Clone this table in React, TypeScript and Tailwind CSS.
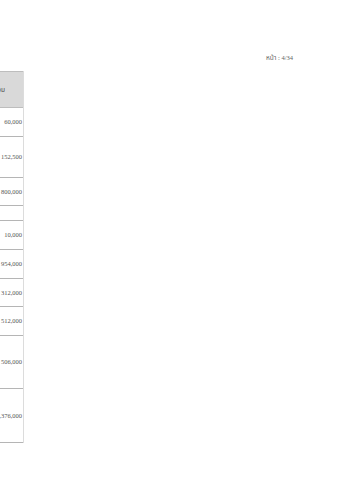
const rows = [
  { amount: '60,000', h: 29 },
  { amount: '152,500', h: 41 },
  { amount: '800,000', h: 28 },
  { amount: '', h: 15 },
  { amount: '10,000', h: 29 },
  { amount: '954,000', h: 29 },
  { amount: '312,000', h: 28 },
  { amount: '512,000', h: 29 },
  { amount: '506,000', h: 53 },
  { amount: '2,376,000', h: 54 },
]

export default function App() {
  return (
    <div
      className="h-[480px] w-[339px] overflow-hidden bg-white text-[#555]"
      style={{ fontFamily: '"Liberation Serif", "Noto Sans Thai", "Noto Sans", serif' }}
    >
      <div className="flex h-[71px] items-end justify-end pr-[46px] pb-[8px] text-[6.5px] text-[#666]">
        หน้า : 4/34
      </div>

      <div className="ml-[-200px] w-[224px] border-r border-[#dcdcdc]">
        <div className="flex h-[37px] items-center justify-end border-y border-[#bdbdbd] bg-[#d9d9d9] pr-[18px] text-[6.5px] text-[#444]">
          รวม
        </div>
        {rows.map((r, i) => (
          <div
            key={i}
            className="flex items-center justify-end whitespace-nowrap border-b border-[#b5b5b5] pr-[1px] text-[6.5px]"
            style={{ height: r.h }}
          >
            {r.amount}
          </div>
        ))}
      </div>
    </div>
  )
}
